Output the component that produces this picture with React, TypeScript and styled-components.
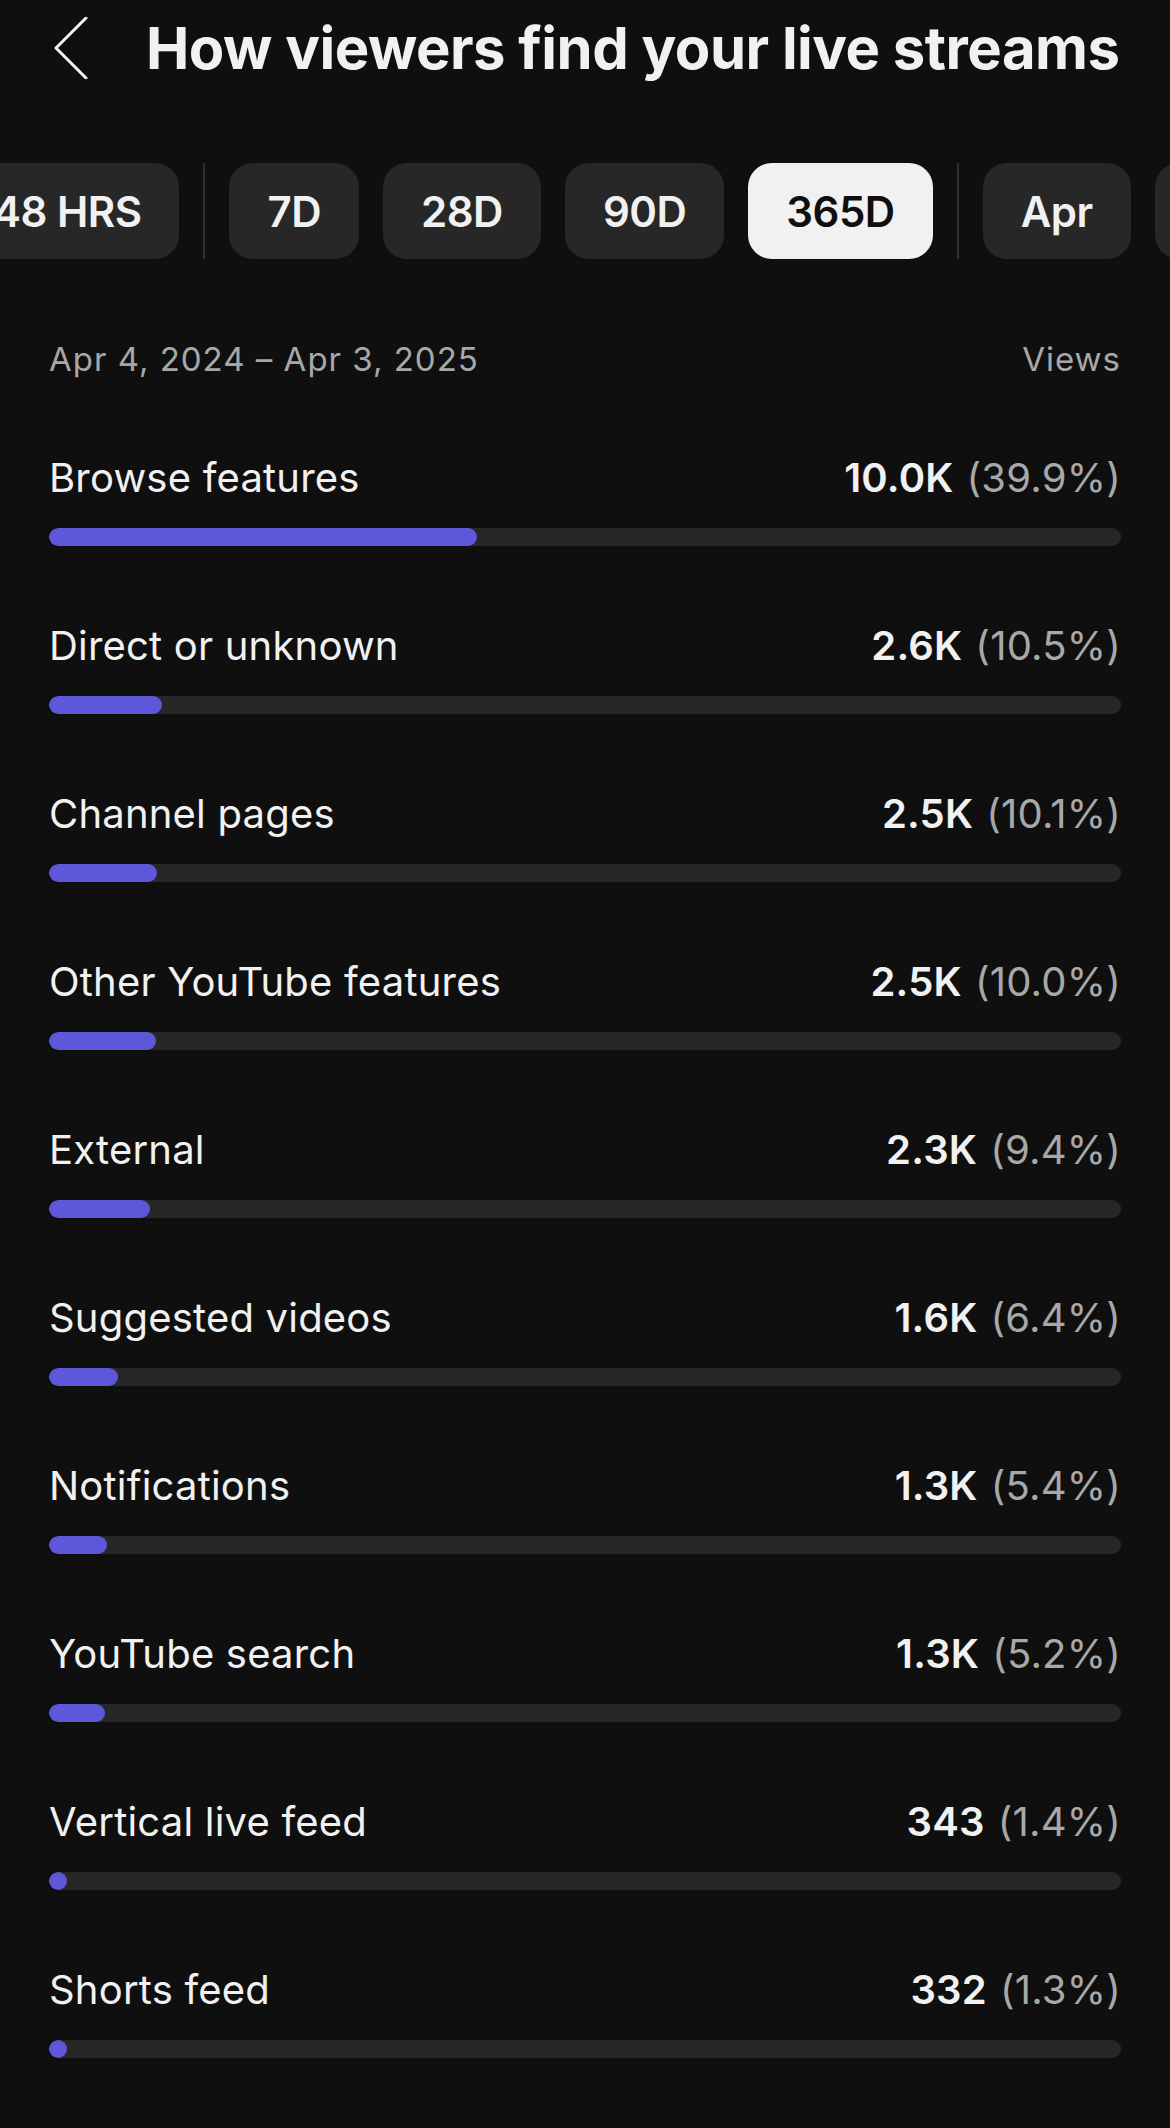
import styled, { createGlobalStyle } from "styled-components";

const GlobalStyle = createGlobalStyle`
  html, body {
    margin: 0;
    padding: 0;
    background-color: #0f0f0f;
    overflow-x: hidden;
  }
  body {
    font-family: "Inter", "Roboto", "Liberation Sans", sans-serif;
    color: #f1f1f1;
  }
`;

const Page = styled.div`
  width: 1170px;
  min-height: 2128px;
  background-color: #0f0f0f;
  overflow: hidden;
`;

const Header = styled.div`
  display: flex;
  align-items: center;
  gap: 58px;
  padding: 13px 49px 0 54px;
`;

const BackButton = styled.button`
  display: flex;
  align-items: center;
  justify-content: center;
  width: 34px;
  height: 70px;
  padding: 0;
  border: none;
  background: none;
  cursor: pointer;
`;

const Title = styled.h1`
  margin: 0;
  font-size: 58px;
  line-height: 70px;
  font-weight: 700;
  letter-spacing: -0.5px;
  white-space: nowrap;
`;

const TabRow = styled.div`
  display: flex;
  align-items: center;
  gap: 24px;
  margin-top: 80px;
  margin-left: -45px;
  white-space: nowrap;
`;

const Tab = styled.div<{ $active?: boolean }>`
  flex: none;
  height: 96px;
  padding: 0 38px;
  display: flex;
  align-items: center;
  border-radius: 24px;
  background-color: ${(p) => (p.$active ? "#f1f1f1" : "#272727")};
  color: ${(p) => (p.$active ? "#0f0f0f" : "#f1f1f1")};
  font-size: 42px;
  font-weight: 600;
  letter-spacing: -0.5px;
`;

const Divider = styled.div`
  flex: none;
  width: 2px;
  height: 96px;
  background-color: #2e2e2e;
`;

const Content = styled.div`
  padding: 0 49px;
`;

const RangeRow = styled.div`
  display: flex;
  justify-content: space-between;
  align-items: baseline;
  margin-top: 80px;
  font-size: 33px;
  line-height: 40px;
  letter-spacing: 1px;
  color: #a8a8a8;
`;

const List = styled.div`
  display: flex;
  flex-direction: column;
  gap: 76px;
  margin-top: 75px;
`;

const Item = styled.div`
  display: flex;
  flex-direction: column;
  gap: 26px;
`;

const ItemHead = styled.div`
  display: flex;
  justify-content: space-between;
  align-items: baseline;
  font-size: 40px;
  line-height: 48px;
  letter-spacing: 0.2px;
`;

const Label = styled.span`
  color: #f1f1f1;
`;

const Value = styled.span`
  font-weight: 600;
  color: #f1f1f1;
`;

const Percent = styled.span`
  color: #a8a8a8;
  margin-left: 13px;
`;

const Track = styled.div`
  height: 18px;
  border-radius: 9px;
  background-color: #272727;
  overflow: hidden;
`;

const Fill = styled.div`
  height: 100%;
  min-width: 18px;
  border-radius: 9px;
  background-color: #5d57d9;
`;

const sources = [
  { label: "Browse features", value: "10.0K", pct: 39.9 },
  { label: "Direct or unknown", value: "2.6K", pct: 10.5 },
  { label: "Channel pages", value: "2.5K", pct: 10.1 },
  { label: "Other YouTube features", value: "2.5K", pct: 10.0 },
  { label: "External", value: "2.3K", pct: 9.4 },
  { label: "Suggested videos", value: "1.6K", pct: 6.4 },
  { label: "Notifications", value: "1.3K", pct: 5.4 },
  { label: "YouTube search", value: "1.3K", pct: 5.2 },
  { label: "Vertical live feed", value: "343", pct: 1.4 },
  { label: "Shorts feed", value: "332", pct: 1.3 },
];

function App() {
  return (
    <Page>
      <GlobalStyle />
      <Header>
        <BackButton aria-label="Back">
          <svg width="34" height="62" viewBox="0 0 34 62">
            <polyline
              points="32,1 2,31 32,61"
              fill="none"
              stroke="#f1f1f1"
              strokeWidth="3"
              strokeLinecap="round"
              strokeLinejoin="round"
            />
          </svg>
        </BackButton>
        <Title>How viewers find your live streams</Title>
      </Header>

      <TabRow>
        <Tab>48 HRS</Tab>
        <Divider />
        <Tab>7D</Tab>
        <Tab>28D</Tab>
        <Tab>90D</Tab>
        <Tab $active>365D</Tab>
        <Divider />
        <Tab>Apr</Tab>
        <Tab>Mar</Tab>
      </TabRow>

      <Content>
        <RangeRow>
          <span>Apr 4, 2024 – Apr 3, 2025</span>
          <span>Views</span>
        </RangeRow>

        <List>
          {sources.map((s) => (
            <Item key={s.label}>
              <ItemHead>
                <Label>{s.label}</Label>
                <span>
                  <Value>{s.value}</Value>
                  <Percent>({s.pct.toFixed(1)}%)</Percent>
                </span>
              </ItemHead>
              <Track>
                <Fill style={{ width: `${s.pct}%` }} />
              </Track>
            </Item>
          ))}
        </List>
      </Content>
    </Page>
  );
}

export default App;
